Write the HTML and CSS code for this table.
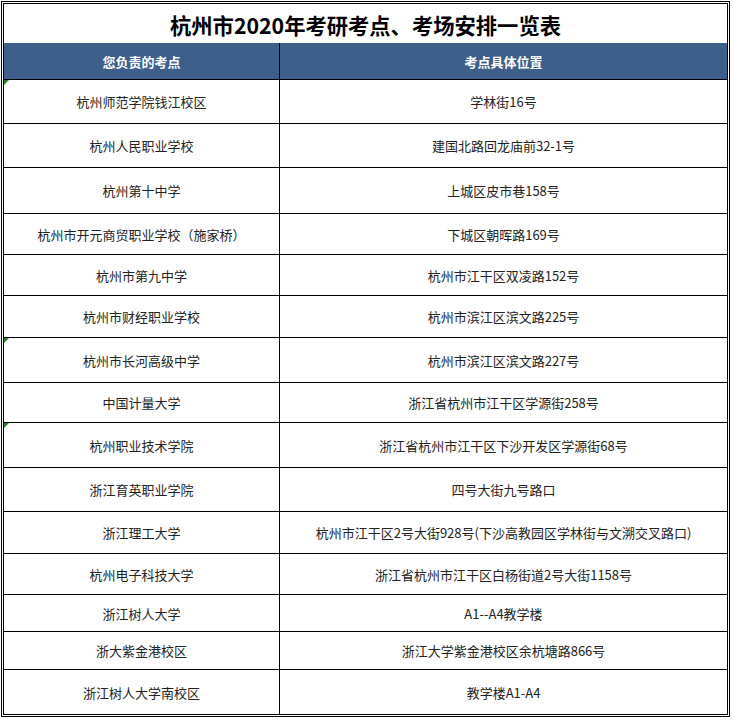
FILE: index.html
```html
<!DOCTYPE html>
<html lang="zh-CN">
<head>
<meta charset="utf-8">
<title>杭州市2020年考研考点、考场安排一览表</title>
<link rel="stylesheet" href="styles.css">
</head>
<body>
<div class="frame">
  <div class="sheet">
    <div class="title">杭州市2020年考研考点、考场安排一览表</div>
    <div class="row head">
      <div class="cell">您负责的考点</div>
      <div class="cell">考点具体位置</div>
    </div>
    <div class="row h44"><div class="cell mark">杭州师范学院钱江校区</div><div class="cell">学林街16号</div></div>
    <div class="row h44"><div class="cell">杭州人民职业学校</div><div class="cell">建国北路回龙庙前32-1号</div></div>
    <div class="row h46"><div class="cell">杭州第十中学</div><div class="cell">上城区皮市巷158号</div></div>
    <div class="row h41"><div class="cell">杭州市开元商贸职业学校（施家桥）</div><div class="cell">下城区朝晖路169号</div></div>
    <div class="row h41"><div class="cell">杭州市第九中学</div><div class="cell">杭州市江干区双凌路152号</div></div>
    <div class="row h42"><div class="cell">杭州市财经职业学校</div><div class="cell">杭州市滨江区滨文路225号</div></div>
    <div class="row h45"><div class="cell mark">杭州市长河高级中学</div><div class="cell">杭州市滨江区滨文路227号</div></div>
    <div class="row h40"><div class="cell">中国计量大学</div><div class="cell">浙江省杭州市江干区学源街258号</div></div>
    <div class="row h45"><div class="cell mark">杭州职业技术学院</div><div class="cell">浙江省杭州市江干区下沙开发区学源街68号</div></div>
    <div class="row h44"><div class="cell">浙江育英职业学院</div><div class="cell">四号大街九号路口</div></div>
    <div class="row h42"><div class="cell">浙江理工大学</div><div class="cell">杭州市江干区2号大街928号(下沙高教园区学林街与文溯交叉路口)</div></div>
    <div class="row h41"><div class="cell">杭州电子科技大学</div><div class="cell">浙江省杭州市江干区白杨街道2号大街1158号</div></div>
    <div class="row h37"><div class="cell">浙江树人大学</div><div class="cell">A1--A4教学楼</div></div>
    <div class="row h38"><div class="cell">浙大紫金港校区</div><div class="cell">浙江大学紫金港校区余杭塘路866号</div></div>
    <div class="row last"><div class="cell">浙江树人大学南校区</div><div class="cell">教学楼A1-A4</div></div>
  </div>
</div>
</body>
</html>
```
FILE: styles.css
```css
* { box-sizing: border-box; }
html, body { margin: 0; padding: 0; background: #fff; }
body {
  font-family: "Noto Sans CJK SC", "Noto Sans", sans-serif;
  color: #222;
}
.frame {
  margin: 1px 0 0 1px;
  width: 729px;
  border: 1px solid #000;
  padding: 1px;
}
.sheet {
  border: 1px solid #000;
  display: flex;
  flex-direction: column;
}
.title {
  height: 39px;
  display: flex;
  align-items: center;
  justify-content: center;
  font-size: 21.3px;
  font-weight: 700;
  color: #000;
  padding-top: 1px;
}
.row {
  display: grid;
  grid-template-columns: 276px 1fr;
  border-bottom: 1px solid #000;
}
.row.last { border-bottom: none; height: 44px; }
.cell {
  position: relative;
  display: flex;
  align-items: center;
  justify-content: center;
  font-size: 13px;
  white-space: nowrap;
}
.cell:first-child { border-right: 1px solid #000; }
.head {
  height: 37px;
  background: #3e5f8c;
}
.head .cell {
  color: #fff;
  font-weight: 700;
}
.h37 { height: 37px; }
.h38 { height: 38px; }
.h40 { height: 40px; }
.h41 { height: 41px; }
.h42 { height: 42px; }
.h44 { height: 44px; }
.h45 { height: 45px; }
.h46 { height: 46px; }
.mark::before {
  content: "";
  position: absolute;
  left: 0;
  top: 0;
  width: 0;
  height: 0;
  border-top: 5px solid #2f7d2f;
  border-right: 5px solid transparent;
}
```
